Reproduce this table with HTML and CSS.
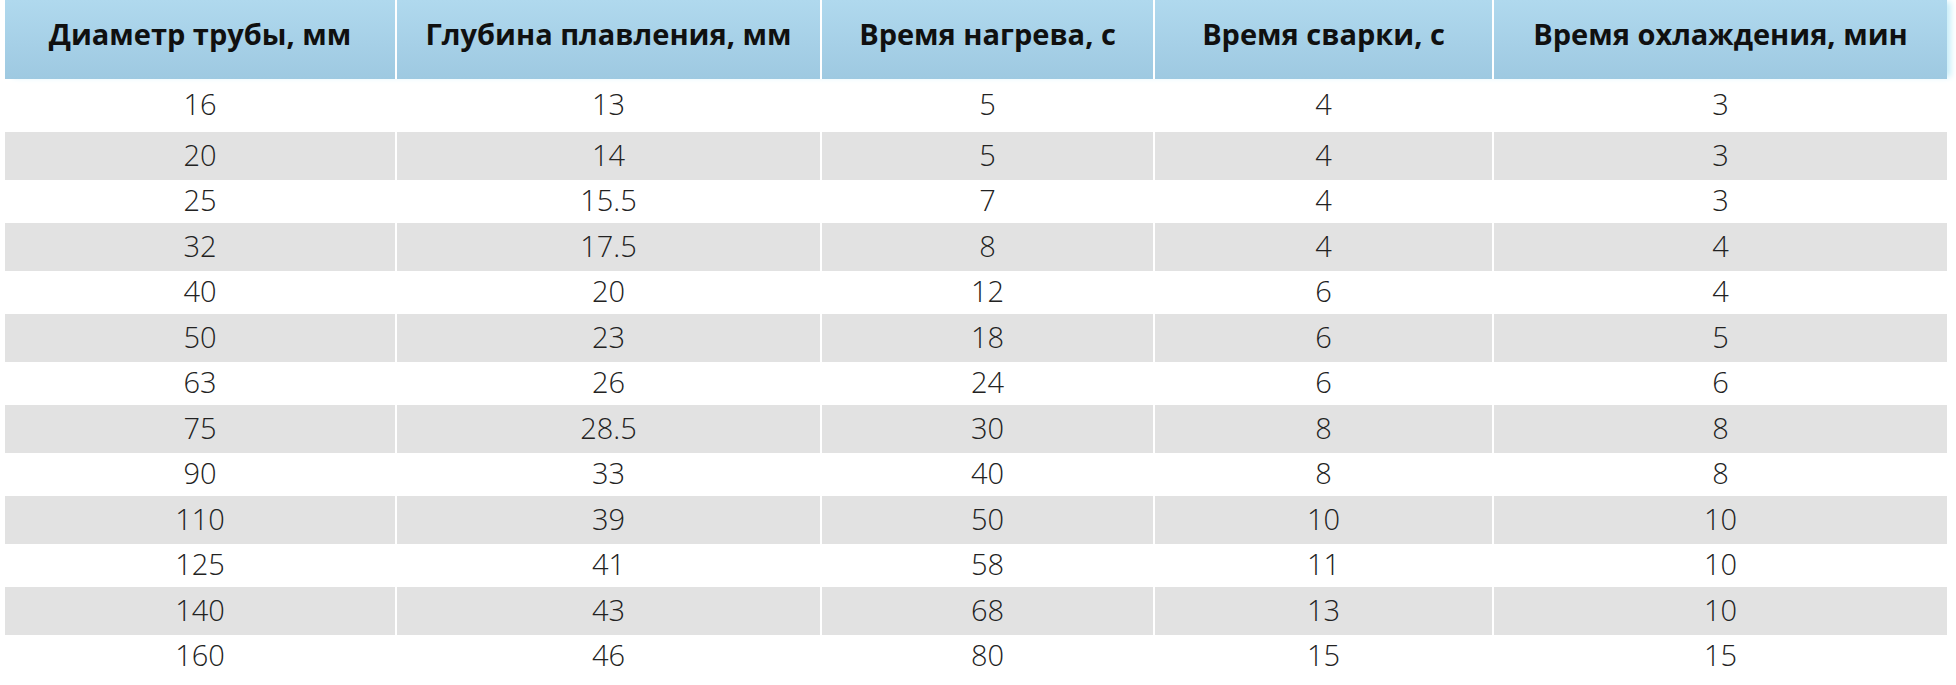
FILE: index.html
```html
<!DOCTYPE html>
<html lang="ru">
<head>
<meta charset="utf-8">
<title>Таблица сварки труб</title>
<link rel="stylesheet" href="styles.css">
</head>
<body>
<div class="table">
  <div class="row head">
    <div class="cell">Диаметр трубы, мм</div>
    <div class="cell">Глубина плавления, мм</div>
    <div class="cell">Время нагрева, с</div>
    <div class="cell">Время сварки, с</div>
    <div class="cell">Время охлаждения, мин</div>
  </div>
  <div class="row odd first"><div class="cell">16</div><div class="cell">13</div><div class="cell">5</div><div class="cell">4</div><div class="cell">3</div></div>
  <div class="row even"><div class="cell">20</div><div class="cell">14</div><div class="cell">5</div><div class="cell">4</div><div class="cell">3</div></div>
  <div class="row odd"><div class="cell">25</div><div class="cell">15.5</div><div class="cell">7</div><div class="cell">4</div><div class="cell">3</div></div>
  <div class="row even"><div class="cell">32</div><div class="cell">17.5</div><div class="cell">8</div><div class="cell">4</div><div class="cell">4</div></div>
  <div class="row odd"><div class="cell">40</div><div class="cell">20</div><div class="cell">12</div><div class="cell">6</div><div class="cell">4</div></div>
  <div class="row even"><div class="cell">50</div><div class="cell">23</div><div class="cell">18</div><div class="cell">6</div><div class="cell">5</div></div>
  <div class="row odd"><div class="cell">63</div><div class="cell">26</div><div class="cell">24</div><div class="cell">6</div><div class="cell">6</div></div>
  <div class="row even"><div class="cell">75</div><div class="cell">28.5</div><div class="cell">30</div><div class="cell">8</div><div class="cell">8</div></div>
  <div class="row odd"><div class="cell">90</div><div class="cell">33</div><div class="cell">40</div><div class="cell">8</div><div class="cell">8</div></div>
  <div class="row even"><div class="cell">110</div><div class="cell">39</div><div class="cell">50</div><div class="cell">10</div><div class="cell">10</div></div>
  <div class="row odd"><div class="cell">125</div><div class="cell">41</div><div class="cell">58</div><div class="cell">11</div><div class="cell">10</div></div>
  <div class="row even"><div class="cell">140</div><div class="cell">43</div><div class="cell">68</div><div class="cell">13</div><div class="cell">10</div></div>
  <div class="row odd"><div class="cell">160</div><div class="cell">46</div><div class="cell">80</div><div class="cell">15</div><div class="cell">15</div></div>
</div>
</body>
</html>
```

FILE: styles.css
```css
html, body {
  margin: 0;
  padding: 0;
  background: #ffffff;
}

body {
  width: 1956px;
  height: 685px;
  overflow: hidden;
  font-family: "Open Sans", "Noto Sans", sans-serif;
  color: #1e1e1e;
}

.table {
  margin-left: 5px;
  width: 1942px;
}

.row {
  display: grid;
  grid-template-columns: 390px 423px 331px 337px 453px;
  column-gap: 2px;
}

.cell {
  display: flex;
  align-items: center;
  justify-content: center;
  white-space: nowrap;
}

.head {
  height: 79px;
  background: #ffffff;
  box-shadow: 6px 0 6px -2px #c9eef9;
}

.head .cell {
  background: linear-gradient(to bottom, #b0d9ee 0%, #a6d0e7 55%, #9ec9e1 100%);
  font-weight: 700;
  font-size: 29px;
  color: #101010;
  padding-bottom: 12px;
  box-sizing: border-box;
}

.odd, .even {
  font-size: 29px;
  font-weight: 300;
  color: #222222;
}

.odd {
  height: 43px;
}

.odd.first {
  height: 53px;
}

.even {
  height: 48px;
}

.even .cell {
  background: #e2e2e2;
}

.odd .cell, .even .cell {
  padding-bottom: 4px;
  box-sizing: border-box;
}
```
